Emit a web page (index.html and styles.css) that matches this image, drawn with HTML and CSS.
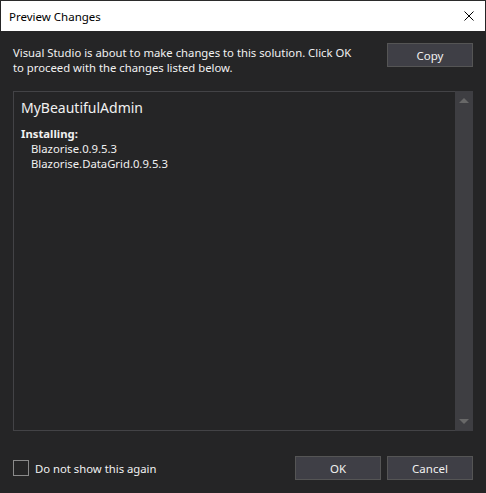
FILE: index.html
```html
<!DOCTYPE html>
<html>
<head>
<meta charset="utf-8">
<link rel="stylesheet" href="styles.css">
</head>
<body>
<div class="window">
  <div class="titlebar">
    <span class="title">Preview Changes</span>
    <svg class="close" width="10" height="10" viewBox="0 0 10 10"><path d="M0.5 0.5 L9.5 9.5 M9.5 0.5 L0.5 9.5" stroke="#000" stroke-width="1" fill="none"/></svg>
  </div>
  <div class="content">
    <div class="desc-row">
      <p class="desc">Visual Studio is about to make changes to this solution. Click OK<br>to proceed with the changes listed below.</p>
      <button class="btn">Copy</button>
    </div>
    <div class="panel">
      <div class="panel-body">
        <div class="project">MyBeautifulAdmin</div>
        <div class="section">Installing:</div>
        <div class="item">Blazorise.0.9.5.3</div>
        <div class="item">Blazorise.DataGrid.0.9.5.3</div>
      </div>
      <div class="scrollbar">
        <span class="arrow up"></span>
        <span class="arrow down"></span>
      </div>
    </div>
    <div class="footer">
      <label class="check"><span class="box"></span><span>Do not show this again</span></label>
      <div class="buttons">
        <button class="btn">OK</button>
        <button class="btn">Cancel</button>
      </div>
    </div>
  </div>
</div>
</body>
</html>
```
FILE: styles.css
```css
html, body {
  margin: 0;
  padding: 0;
  background: #252526;
  width: 486px;
  height: 493px;
  overflow: hidden;
}
.window {
  font-family: "Noto Sans", "Open Sans", sans-serif;
  font-size: 11.3px;
  color: #f1f1f1;
  height: 493px;
  border-top: 1px solid #2b2b2b;
  box-sizing: border-box;
}
.titlebar {
  height: 30px;
  margin: 0 1px 0 1px;
  background: #ffffff;
  display: flex;
  align-items: center;
  justify-content: space-between;
  padding: 0 11px 0 8px;
  color: #000;
}
.title {
  font-size: 11.5px;
}
.close {
  display: block;
}
.content {
  padding: 12px 13px 0 13px;
}
.desc-row {
  display: flex;
  justify-content: space-between;
  align-items: flex-start;
  height: 48px;
}
.desc {
  margin: 0;
  padding-top: 2px;
  line-height: 15px;
}
.btn {
  width: 86px;
  height: 24px;
  background: #3f3f46;
  border: 1px solid #555555;
  color: #f1f1f1;
  font-family: inherit;
  font-size: 11.5px;
  padding: 0;
  margin: 0;
  box-sizing: border-box;
}
.panel {
  height: 340px;
  border: 1px solid #434346;
  border-right: none;
  box-sizing: border-box;
  display: flex;
}
.panel-body {
  flex: 1;
  padding: 6px 7px;
}
.project {
  font-size: 14px;
  line-height: 20px;
  margin-bottom: 8px;
}
.section {
  font-weight: bold;
  line-height: 15px;
}
.item {
  padding-left: 10px;
  line-height: 15px;
}
.scrollbar {
  width: 18px;
  background: #3e3e42;
  margin-top: -1px;
  margin-bottom: -1px;
  display: flex;
  flex-direction: column;
  justify-content: space-between;
  align-items: center;
  padding: 7px 0;
}
.arrow {
  width: 0;
  height: 0;
  border-left: 5px solid transparent;
  border-right: 5px solid transparent;
}
.arrow.up {
  border-bottom: 5px solid #686868;
}
.arrow.down {
  border-top: 5px solid #686868;
}
.footer {
  margin-top: 25px;
  display: flex;
  justify-content: space-between;
  align-items: center;
}
.check {
  display: flex;
  align-items: center;
  gap: 6px;
}
.box {
  width: 16px;
  height: 16px;
  border: 1px solid #8a8a8a;
  box-sizing: border-box;
}
.buttons {
  display: flex;
  gap: 6px;
}
```
